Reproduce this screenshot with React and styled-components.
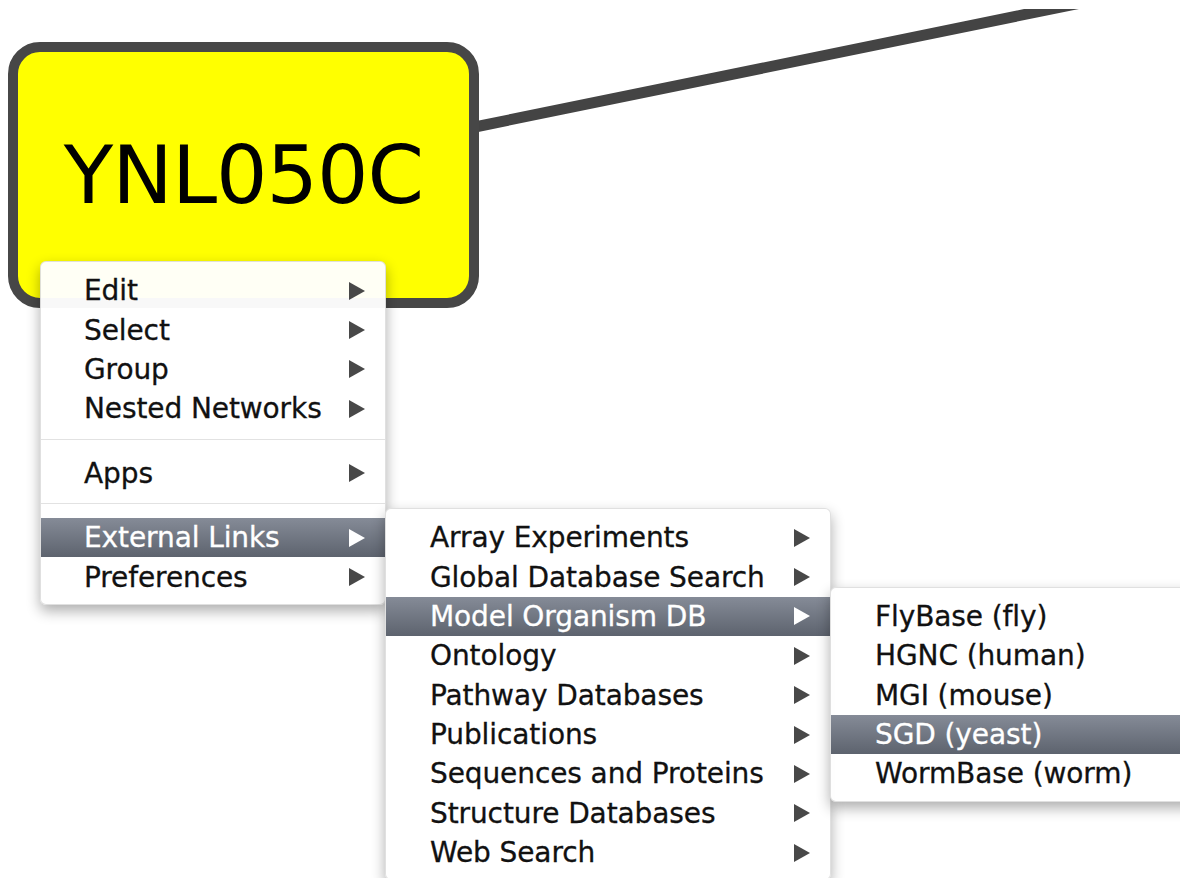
import React from "react";
import styled, { createGlobalStyle } from "styled-components";

const GlobalStyle = createGlobalStyle`
  html, body {
    margin: 0;
    padding: 0;
    background: #ffffff;
  }
`;

const Canvas = styled.div`
  position: relative;
  width: 1180px;
  height: 878px;
  overflow: hidden;
  background: #ffffff;
  font-family: "DejaVu Sans", "Lucida Grande", sans-serif;
`;

const EdgeLayer = styled.svg`
  position: absolute;
  left: 0;
  top: 9px;
  width: 1180px;
  height: 300px;
  overflow: hidden;
`;

const Node = styled.div`
  position: absolute;
  left: 8px;
  top: 42px;
  width: 471px;
  height: 266px;
  box-sizing: border-box;
  border: 10px solid #474747;
  border-radius: 32px;
  background: #ffff00;
  display: flex;
  align-items: center;
  justify-content: center;
  font-size: 81px;
  letter-spacing: -1px;
  color: #000000;
`;

const Menu = styled.div`
  position: absolute;
  left: ${(p) => p.$left || "100%"};
  top: ${(p) => p.$top || "-10px"};
  width: ${(p) => p.$width}px;
  box-sizing: border-box;
  padding: 9px 0 7px;
  background: rgba(255, 255, 255, 0.96);
  border: 1px solid rgba(0, 0, 0, 0.12);
  border-radius: 6px;
  box-shadow: 0 6px 14px rgba(0, 0, 0, 0.32);
`;

const Item = styled.div`
  position: relative;
  height: 39.4px;
  display: flex;
  align-items: center;
  justify-content: space-between;
  padding: 0 20px 0 ${(p) => p.$indent}px;
  font-size: 28px;
  letter-spacing: -0.1px;
  -webkit-text-stroke: 0.3px ${(p) => (p.$active ? "#ffffff" : "#111111")};
  color: ${(p) => (p.$active ? "#ffffff" : "#111111")};
  background: ${(p) =>
    p.$active ? "linear-gradient(#858b97, #5d636e)" : "transparent"};
  white-space: nowrap;
`;

const Separator = styled.div`
  height: 1px;
  margin: 10px 0 14px;
  background: #e2e2e2;
`;

const Arrow = styled.span`
  width: 0;
  height: 0;
  border-top: 9px solid transparent;
  border-bottom: 9px solid transparent;
  border-left: 16px solid ${(p) => (p.$active ? "#ffffff" : "#484848")};
`;

function MenuItem({ label, active, indent = 43, arrow = true, children }) {
  return (
    <Item $active={active} $indent={indent}>
      <span>{label}</span>
      {arrow && <Arrow $active={active} />}
      {children}
    </Item>
  );
}

export default function App() {
  return (
    <>
      <GlobalStyle />
      <Canvas>
        <EdgeLayer viewBox="0 9 1180 300">
          <line
            x1="470"
            y1="128"
            x2="1115"
            y2="-4"
            stroke="#444444"
            strokeWidth="11"
          />
        </EdgeLayer>
        <Node>YNL050C</Node>
        <Menu $left="40px" $top="261px" $width={346}>
          <MenuItem label="Edit" />
          <MenuItem label="Select" />
          <MenuItem label="Group" />
          <MenuItem label="Nested Networks" />
          <Separator />
          <MenuItem label="Apps" />
          <Separator />
          <MenuItem label="External Links" active>
            <Menu $width={446}>
              <MenuItem label="Array Experiments" indent={44} />
              <MenuItem label="Global Database Search" indent={44} />
              <MenuItem label="Model Organism DB" indent={44} active>
                <Menu $width={380}>
                  <MenuItem label="FlyBase (fly)" indent={44} arrow={false} />
                  <MenuItem label="HGNC (human)" indent={44} arrow={false} />
                  <MenuItem label="MGI (mouse)" indent={44} arrow={false} />
                  <MenuItem
                    label="SGD (yeast)"
                    indent={44}
                    arrow={false}
                    active
                  />
                  <MenuItem
                    label="WormBase (worm)"
                    indent={44}
                    arrow={false}
                  />
                </Menu>
              </MenuItem>
              <MenuItem label="Ontology" indent={44} />
              <MenuItem label="Pathway Databases" indent={44} />
              <MenuItem label="Publications" indent={44} />
              <MenuItem label="Sequences and Proteins" indent={44} />
              <MenuItem label="Structure Databases" indent={44} />
              <MenuItem label="Web Search" indent={44} />
            </Menu>
          </MenuItem>
          <MenuItem label="Preferences" />
        </Menu>
      </Canvas>
    </>
  );
}
